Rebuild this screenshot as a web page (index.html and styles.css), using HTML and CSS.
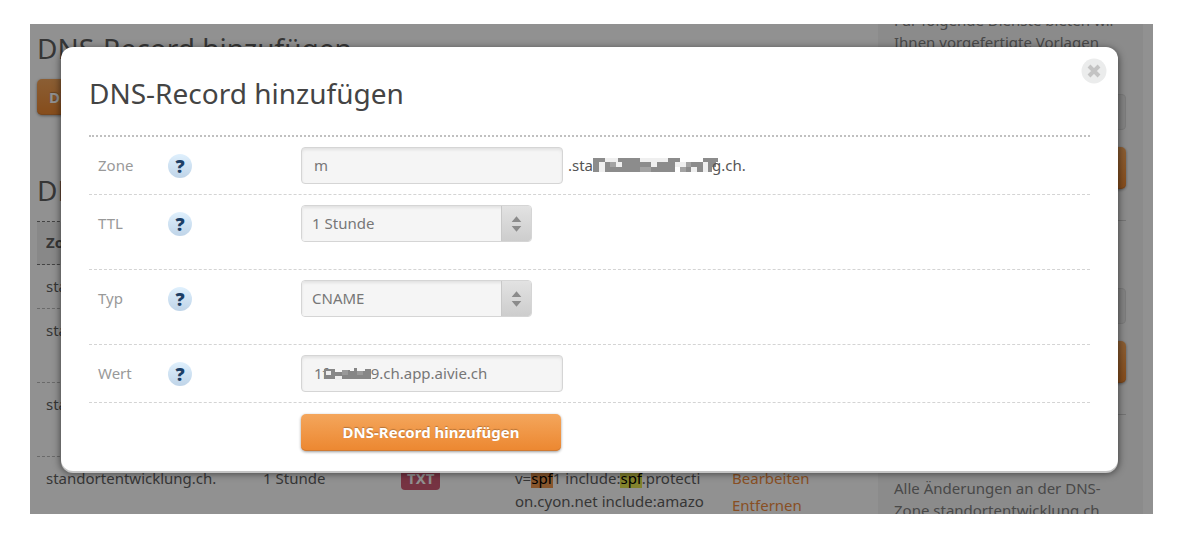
FILE: index.html
```html
<!DOCTYPE html>
<html lang="de">
<head>
  <meta charset="UTF-8">
  <meta name="viewport" content="width=device-width, initial-scale=1.0">
  <title>DNS-Record hinzufügen</title>
  <link rel="stylesheet" href="styles.css">
</head>
<body>
  <div class="page">
    <main class="content">
      <h1>DNS-Record hinzufügen</h1>
      <button class="btn btn-open" type="button">DNS-Record hinzufügen</button>

      <h2>DNS-Records</h2>
      <table class="records">
        <thead>
          <tr>
            <th class="col-zone">Zone</th>
            <th class="col-ttl"></th>
            <th class="col-type"></th>
            <th class="col-value"></th>
            <th></th>
          </tr>
        </thead>
        <tbody>
          <tr>
            <td>standortentwicklung.ch.</td>
            <td></td><td></td><td></td><td></td>
          </tr>
          <tr class="tall">
            <td>standortentwicklung.ch.</td>
            <td></td><td></td><td></td><td></td>
          </tr>
          <tr class="tall">
            <td>standortentwicklung.ch.</td>
            <td></td><td></td><td></td><td></td>
          </tr>
          <tr class="tall">
            <td>standortentwicklung.ch.</td>
            <td>1 Stunde</td>
            <td><span class="tag">TXT</span></td>
            <td class="value">v=<mark class="current">spf</mark>1 include:<mark>spf</mark>.protecti<br>on.cyon.net include:amazo</td>
            <td class="actions"><a href="#">Bearbeiten</a><a href="#">Entfernen</a></td>
          </tr>
        </tbody>
      </table>
    </main>

    <aside class="sidebar">
      <section>
        <p>Für folgende Dienste bieten wir<br>Ihnen vorgefertigte Vorlagen</p>
        <select class="side-select" aria-label="Vorlage"><option></option></select>
        <button class="btn side-btn" type="button" aria-label="Vorlage anwenden"></button>
      </section>
      <section>
        <p></p>
        <select class="side-select" aria-label="Zone"><option></option></select>
        <button class="btn side-btn" type="button" aria-label="Zone anwenden"></button>
      </section>
      <section class="note">
        <p>Alle Änderungen an der DNS-<br>Zone standortentwicklung.ch</p>
      </section>
    </aside>

    <div class="overlay">
      <div class="dialog" role="dialog" aria-labelledby="dialogTitle">
        <button class="close" type="button" aria-label="Schliessen">
          <svg width="26" height="26" viewBox="0 0 26 26">
            <circle cx="13" cy="13" r="12.5" fill="#ebecec"/>
            <path d="M8 8 L18 18 M18 8 L8 18" stroke="#c3c3c3" stroke-width="4"/>
          </svg>
        </button>
        <h2 class="dialog-title" id="dialogTitle">DNS-Record hinzufügen</h2>

        <form class="form">
          <div class="row">
            <label for="zone">Zone</label>
            <button class="help" type="button" aria-label="Hilfe zu Zone">?</button>
            <div class="field">
              <input type="text" id="zone" value="m">
              <span class="suffix">.sta<svg class="mosaic" width="125" height="14" viewBox="0 0 125 14" shape-rendering="crispEdges">
                <path fill="#efefef" d="M6 4h6v10H6zM12 0h13v4H12zM47 0h28v4H47zM23 4h6v5h-6zM58 4h6v5h-6zM82 4h11v5H82zM98 9h6v5h-6zM110 4h5v10h-5z"/>
                <path fill="#8c8c8c" d="M0 0h12v4H0zM25 0h22v4H25zM75 0h12v4H75zM110 0h15v4h-15zM0 4h6v10H0zM12 4h11v5H12zM29 4h29v5H29zM64 4h18v5H64zM93 4h17v5H93zM115 4h8v5h-8zM12 9h70v5H12zM87 9h11v5H87zM104 9h6v5h-6zM115 9h4v5h-4z"/>
                <path fill="#a3a3a3" d="M17 4h6v5h-6zM47 9h11v5H47zM93 4h5v5h-5zM87 9h6v5h-6z"/>
              </svg>g.ch.</span>
            </div>
          </div>

          <div class="row row-tall">
            <label for="ttl">TTL</label>
            <button class="help" type="button" aria-label="Hilfe zu TTL">?</button>
            <div class="select">
              <select id="ttl"><option>1 Stunde</option></select>
              <svg class="arrows" width="30" height="35" viewBox="0 0 30 35">
                <path d="M15 10 L20 16 H10 Z M10 20 H20 L15 26 Z" fill="#8b8b8b"/>
              </svg>
            </div>
          </div>

          <div class="row row-tall">
            <label for="type">Typ</label>
            <button class="help" type="button" aria-label="Hilfe zu Typ">?</button>
            <div class="select">
              <select id="type"><option>CNAME</option></select>
              <svg class="arrows" width="30" height="35" viewBox="0 0 30 35">
                <path d="M15 10 L20 16 H10 Z M10 20 H20 L15 26 Z" fill="#8b8b8b"/>
              </svg>
            </div>
          </div>

          <div class="row">
            <label for="value">Wert</label>
            <button class="help" type="button" aria-label="Hilfe zu Wert">?</button>
            <div class="field">
              <input type="text" id="value" value="1f&nbsp;&nbsp;&nbsp;&nbsp;&nbsp;&nbsp;&nbsp;&nbsp;&nbsp;&nbsp;&nbsp;9.ch.app.aivie.ch">
              <svg class="mosaic-over" width="48" height="14" viewBox="0 0 48 14" shape-rendering="crispEdges">
                <path fill="#ededed" d="M3 4h5v4H3zM12 9h7v4h-7z"/>
                <path fill="#868686" d="M1 2h11v2H1zM1 4h2v8H1zM8 4h4v8H8zM3 8h5v4H3zM12 5h7v4h-7zM19 3h8v9h-8zM27 4h21v8H27zM31 1h3v3h-3zM42 2h6v2h-6z"/>
                <path fill="#999" d="M19 3h6v5h-6zM34 4h6v4h-6z"/>
              </svg>
            </div>
          </div>

          <div class="row row-submit">
            <button class="btn btn-submit" type="button">DNS-Record hinzufügen</button>
          </div>
        </form>
      </div>
    </div>
  </div>
</body>
</html>
```

FILE: styles.css
```css
* {
  box-sizing: border-box;
}

body {
  margin: 0;
  padding: 24px 41px 36px 30px;
  height: 100vh;
  background: #fff;
  font-family: "Noto Sans", "Open Sans", sans-serif;
  font-size: 15px;
  line-height: 23px;
  color: #555;
}

h1, h2 {
  margin: 0;
  font-size: 28px;
  line-height: 40px;
  font-weight: normal;
}

p {
  margin: 0;
}

input, select, button {
  font: inherit;
}

.page {
  position: relative;
  display: flex;
  height: 100%;
  overflow: hidden;
}

/* page behind the dialog */
.content {
  flex: 1;
  padding: 4px 16px 0 7px;
  color: #5f5f5f;
}

.content h2 {
  margin: 55px 0 11px;
}

.btn {
  display: block;
  border: 0;
  border-radius: 5px;
  background: linear-gradient(#f4a65c, #ec8730);
  box-shadow: inset 0 -1px 0 #cf7b35, 0 1px 3px rgba(0,0,0,0.4);
  color: #fff;
  font-weight: bold;
  text-shadow: 0 -1px 1px rgba(0,0,0,0.25);
  cursor: pointer;
}

.btn-open {
  height: 36px;
  margin-top: 11px;
  padding: 0 12px;
}

.records {
  width: 100%;
  table-layout: fixed;
  border-collapse: collapse;
}

.records th, .records td {
  padding: 10px 9px;
  text-align: left;
  vertical-align: top;
  border-bottom: 1px dashed #bbb;
}

.records th {
  padding-top: 9px;
  background: #f0f0f0;
  border-top: 1px dashed #777;
  border-bottom-color: #777;
}

.records .tall td {
  height: 74px;
}

.col-zone {
  width: 217px;
}

.col-ttl {
  width: 138px;
}

.col-type {
  width: 114px;
}

.col-value {
  width: 217px;
}

.tag {
  display: inline-block;
  padding: 0 6px;
  border-radius: 4px;
  background: #cf5a74;
  color: #fff;
  font-weight: bold;
}

.records .value {
  white-space: nowrap;
}

mark {
  background: #e6e650;
  color: #000;
}

mark.current {
  background: #f09850;
}

a {
  color: #f08c40;
  text-decoration: none;
}

.actions a {
  display: block;
  margin-bottom: 4px;
}

.sidebar {
  width: 275px;
  padding: 0 17px 0 16px;
  background: #f5f5f5;
  border-right: 10px solid #fff;
  line-height: 22px;
  color: #808080;
}

.sidebar section {
  height: 194px;
  border-bottom: 1px solid #ccc;
}

.sidebar section:first-child {
  height: 212px;
  margin-top: -15px;
}

.sidebar section:first-child p {
  height: 85px;
}

.sidebar section p {
  height: 67px;
}

.sidebar .note {
  padding-top: 62px;
  border: 0;
}

.side-select {
  display: block;
  width: 100%;
  height: 36px;
  margin-bottom: 17px;
  border: 1px solid #d8d8d8;
  border-radius: 4px;
  appearance: none;
  background: #e6e6e6;
}

.side-btn {
  width: 100%;
  height: 42px;
}

/* dialog */
.overlay {
  position: absolute;
  inset: 0;
  padding: 23px 35px 0 31px;
  background: rgba(0,0,0,0.43);
}

.dialog {
  position: relative;
  padding: 26px 28px 20px;
  border-radius: 12px;
  background: #fff;
  box-shadow: 0 2px 0 #c4c4c4, 0 2px 7px 1px rgba(0,0,0,0.5);
}

.close {
  position: absolute;
  top: 11px;
  right: 11px;
  width: 26px;
  height: 26px;
  padding: 0;
  border: 0;
  background: none;
  cursor: pointer;
}

.close svg {
  display: block;
}

.dialog-title {
  padding-bottom: 22px;
  border-bottom: 2px dotted #c0c0c0;
  color: #444;
}

.row {
  display: grid;
  grid-template-columns: 70px 133px 1fr;
  align-items: start;
  padding: 10px 0 10px 9px;
  border-bottom: 1px dashed #d4d4d4;
}

.row-tall {
  padding-bottom: 27px;
}

.row label {
  padding-top: 7px;
  color: #999;
}

.help {
  width: 24px;
  height: 24px;
  margin-top: 7px;
  padding: 0;
  border: 0;
  border-radius: 50%;
  background: linear-gradient(#dff0fd, #bfd4e8);
  color: #1c3f66;
  font-size: 18px;
  font-weight: 900;
  line-height: 24px;
  cursor: pointer;
}

.field {
  position: relative;
  display: flex;
  align-items: center;
}

.field input {
  width: 262px;
  height: 37px;
  padding: 0 12px 2px;
  border: 1px solid #d5d5d5;
  border-radius: 4px;
  background: #f5f5f5;
  box-shadow: inset 0 2px 3px rgba(0,0,0,0.08);
  color: #777;
}

.suffix {
  padding-left: 5px;
  white-space: nowrap;
}

.mosaic {
  margin-right: -6px;
  vertical-align: -1px;
}

.mosaic-over {
  position: absolute;
  left: 22px;
  top: 12px;
}

.select {
  position: relative;
  width: 231px;
  height: 37px;
  border: 1px solid #d5d5d5;
  border-radius: 4px;
  overflow: hidden;
}

.select select {
  display: block;
  width: 100%;
  height: 100%;
  padding: 0 40px 0 10px;
  border: 0;
  appearance: none;
  background: #f5f5f5;
  box-shadow: inset 0 2px 3px rgba(0,0,0,0.08);
  color: #777;
}

.arrows {
  position: absolute;
  top: 0;
  right: 0;
  border-left: 1px solid #c8c8c8;
  background: linear-gradient(#e2e2e2, #cdcdcd);
  pointer-events: none;
}

.row-submit {
  padding-top: 11px;
  padding-bottom: 0;
  border: 0;
}

.btn-submit {
  grid-column: 3;
  width: 260px;
  height: 37px;
}
```
